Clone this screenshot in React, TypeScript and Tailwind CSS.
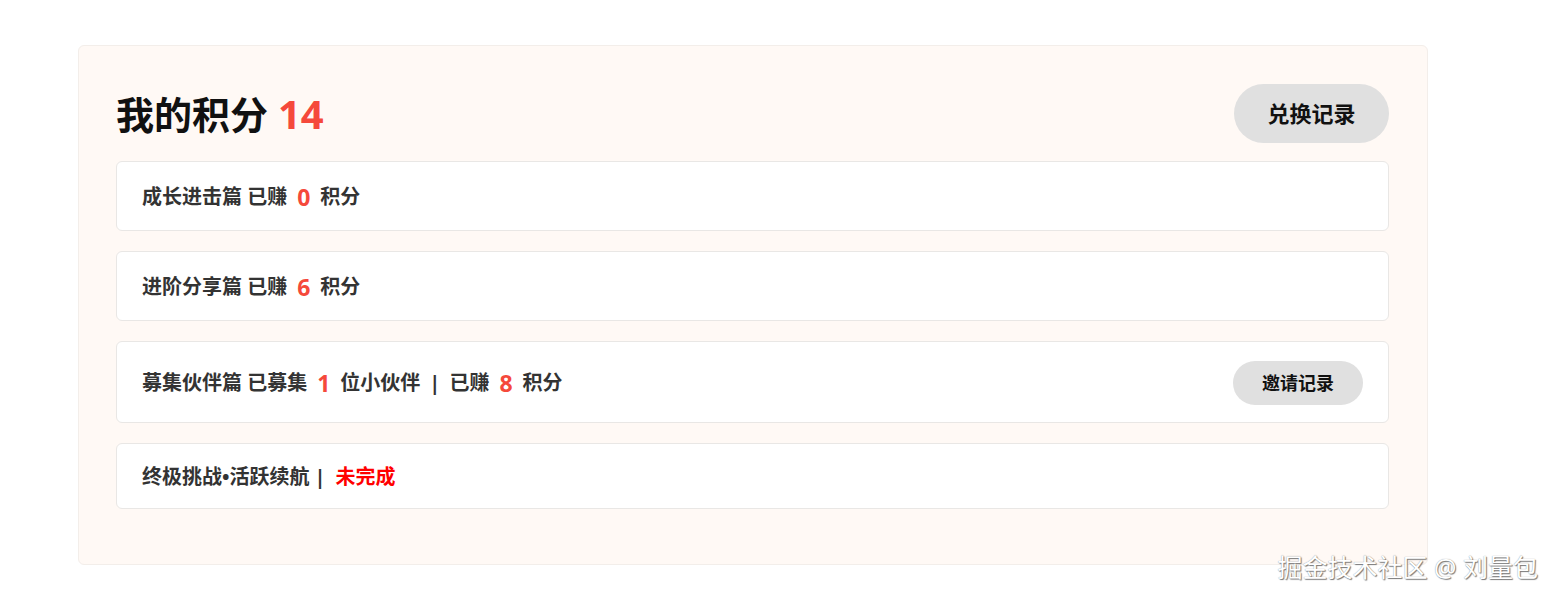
const font = { fontFamily: '"Noto Sans", "Noto Sans CJK SC", sans-serif' };

function Num({ children }: { children: React.ReactNode }) {
  return <span className="mx-[10px] text-[23px] leading-[32px] text-[#f5493b]">{children}</span>;
}

function Row({ children, action }: { children: React.ReactNode; action?: React.ReactNode }) {
  return (
    <div className="mb-5 flex items-center justify-between rounded-md border border-[#e9e7e5] bg-white pb-[17px] pl-[25px] pr-[25px] pt-[19px]">
      <div className="flex items-center text-[20px] font-bold leading-[28px] text-[#333]">{children}</div>
      {action}
    </div>
  );
}

export default function App() {
  return (
    <div className="relative min-h-[600px] bg-white pt-[45px]" style={font}>
      <div className="mx-[78px] w-[1350px] rounded-md border border-[#f3eeea] bg-[#fff9f5] pb-[35px] pl-[37px] pr-[38px] pt-[38px]">
        <div className="mb-[18px] flex items-center justify-between">
          <h1 className="text-[38px] font-bold leading-[48px] text-[#111]">
            我的积分 <span className="text-[40px] text-[#f5493b]">14</span>
          </h1>
          <button className="h-[59px] w-[155px] rounded-full bg-[#e0e0e0] text-[22px] font-bold text-[#111]">
            兑换记录
          </button>
        </div>

        <Row>
          成长进击篇 已赚<Num>0</Num>积分
        </Row>
        <Row>
          进阶分享篇 已赚<Num>6</Num>积分
        </Row>
        <Row
          action={
            <button className="h-[44px] w-[130px] rounded-full bg-[#e0e0e0] text-[18px] font-bold text-[#111]">
              邀请记录
            </button>
          }
        >
          募集伙伴篇 已募集<Num>1</Num>位小伙伴
          <span className="mx-[9px]">|</span>
          已赚<Num>8</Num>积分
        </Row>
        <Row>
          终极挑战•活跃续航
          <span className="ml-[5px] mr-[10px]">|</span>
          <span className="text-[#f00]">未完成</span>
        </Row>
      </div>

      <div
        className="absolute bottom-[18px] right-[18px] text-[25px] leading-[30px] text-white"
        style={{ textShadow: '1px 1px 1px #777, 0 0 1px #888' }}
      >
        掘金技术社区 @ 刘量包
      </div>
    </div>
  );
}
